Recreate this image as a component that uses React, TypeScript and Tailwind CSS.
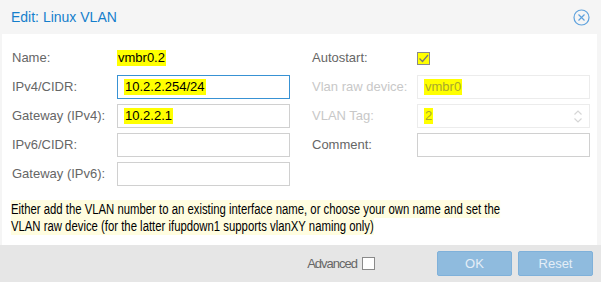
import React from 'react';

const FONT = { fontFamily: '"Liberation Sans", Arial, sans-serif' };

function Label({ text, disabled = false }: { text: string; disabled?: boolean }) {
  return (
    <div className={`w-[105px] shrink-0 ${disabled ? 'text-[#c8c8c8]' : 'text-[#666]'}`}>{text}</div>
  );
}

function Field({
  value,
  focused = false,
  disabled = false,
  spinner = false,
}: {
  value?: string;
  focused?: boolean;
  disabled?: boolean;
  spinner?: boolean;
}) {
  const border = focused ? 'border-[#3892d4]' : disabled ? 'border-[#ececec]' : 'border-[#d0d0d0]';
  return (
    <div className={`relative flex h-[24px] w-[173px] items-center border ${border} bg-white pl-[6px]`}>
      {value && (
        <span
          className={`bg-[#ffff00] px-[1px] leading-[16px] ${disabled ? 'text-[#a9a92c]' : 'text-black'}`}
        >
          {value}
        </span>
      )}
      {spinner && (
        <svg className="absolute right-[6px] top-[4px]" width="10" height="15" viewBox="0 0 10 15">
          <path d="M1.5 5.5 L5 2 L8.5 5.5" fill="none" stroke="#d6d6d6" strokeWidth="1.2" />
          <path d="M1.5 9.5 L5 13 L8.5 9.5" fill="none" stroke="#d6d6d6" strokeWidth="1.2" />
        </svg>
      )}
    </div>
  );
}

function Row({ children }: { children: React.ReactNode }) {
  return <div className="flex h-[24px] items-center">{children}</div>;
}

export default function App() {
  return (
    <div className="flex h-[282px] w-[601px] flex-col bg-[#f5f5f5] text-[13px]" style={FONT}>
      {/* Header */}
      <div className="flex h-[34px] shrink-0 items-center justify-between pl-[11px] pr-[11px]">
        <span className="text-[14px] text-[#157fcc]">Edit: Linux VLAN</span>
        <svg width="17" height="17" viewBox="0 0 17 17">
          <circle cx="8.5" cy="8.5" r="7.5" fill="none" stroke="#5fa2dd" strokeWidth="1.2" />
          <path d="M5.5 5.5 L11.5 11.5 M11.5 5.5 L5.5 11.5" stroke="#5fa2dd" strokeWidth="1.2" />
        </svg>
      </div>

      {/* Body */}
      <div className="ml-[2px] mr-[4px] flex flex-1 flex-col overflow-hidden bg-white pt-[12px]">
        <div className="flex pl-[10px]">
          {/* Left column */}
          <div className="flex w-[300px] flex-col gap-[5px]">
            <Row>
              <Label text="Name:" />
              <span className="bg-[#ffff00] px-[1px] leading-[16px] text-black">vmbr0.2</span>
            </Row>
            <Row>
              <Label text="IPv4/CIDR:" />
              <Field value="10.2.2.254/24" focused />
            </Row>
            <Row>
              <Label text="Gateway (IPv4):" />
              <Field value="10.2.2.1" />
            </Row>
            <Row>
              <Label text="IPv6/CIDR:" />
              <Field />
            </Row>
            <Row>
              <Label text="Gateway (IPv6):" />
              <Field />
            </Row>
          </div>

          {/* Right column */}
          <div className="flex flex-col gap-[5px]">
            <Row>
              <Label text="Autostart:" />
              <div className="flex h-[13px] w-[13px] items-center justify-center border border-[#8a8a8a] bg-[#ffff00]">
                <svg width="11" height="11" viewBox="0 0 11 11">
                  <path d="M1.5 5.5 L4.5 8.5 L10 2" fill="none" stroke="#777" strokeWidth="1.2" />
                </svg>
              </div>
            </Row>
            <Row>
              <Label text="Vlan raw device:" disabled />
              <Field value="vmbr0" disabled />
            </Row>
            <Row>
              <Label text="VLAN Tag:" disabled />
              <Field value="2" disabled spinner />
            </Row>
            <Row>
              <Label text="Comment:" />
              <Field />
            </Row>
          </div>
        </div>

        {/* Help text (rendered narrow like the original) */}
        <div className="mt-[15px] w-[625px] shrink-0 origin-left scale-x-[0.81] pl-[11px] text-[14px] leading-[17px] text-black">
          <span className="bg-[#fffde0] py-[1px]">
            Either add the VLAN number to an existing interface name, or choose your own name and set the VLAN raw
            device (for the latter ifupdown1 supports vlanXY naming only)
          </span>
        </div>
      </div>

      {/* Footer */}
      <div className="flex h-[37px] shrink-0 items-center justify-end gap-[6px] bg-[#e6e6e6] pr-[8px]">
        <div className="mr-[56px] flex items-center gap-[5px] text-[#666]">
          <span className="tracking-[-1px]">Advanced</span>
          <div className="h-[13px] w-[13px] border border-[#8a8a8a] bg-white" />
        </div>
        <button className="h-[25px] w-[75px] rounded-[2px] border border-[#7fb1da] bg-[#8fbbde] text-[#e4eef7]">
          OK
        </button>
        <button className="h-[25px] w-[75px] rounded-[2px] border border-[#7fb1da] bg-[#8fbbde] text-[#e4eef7]">
          Reset
        </button>
      </div>
    </div>
  );
}
